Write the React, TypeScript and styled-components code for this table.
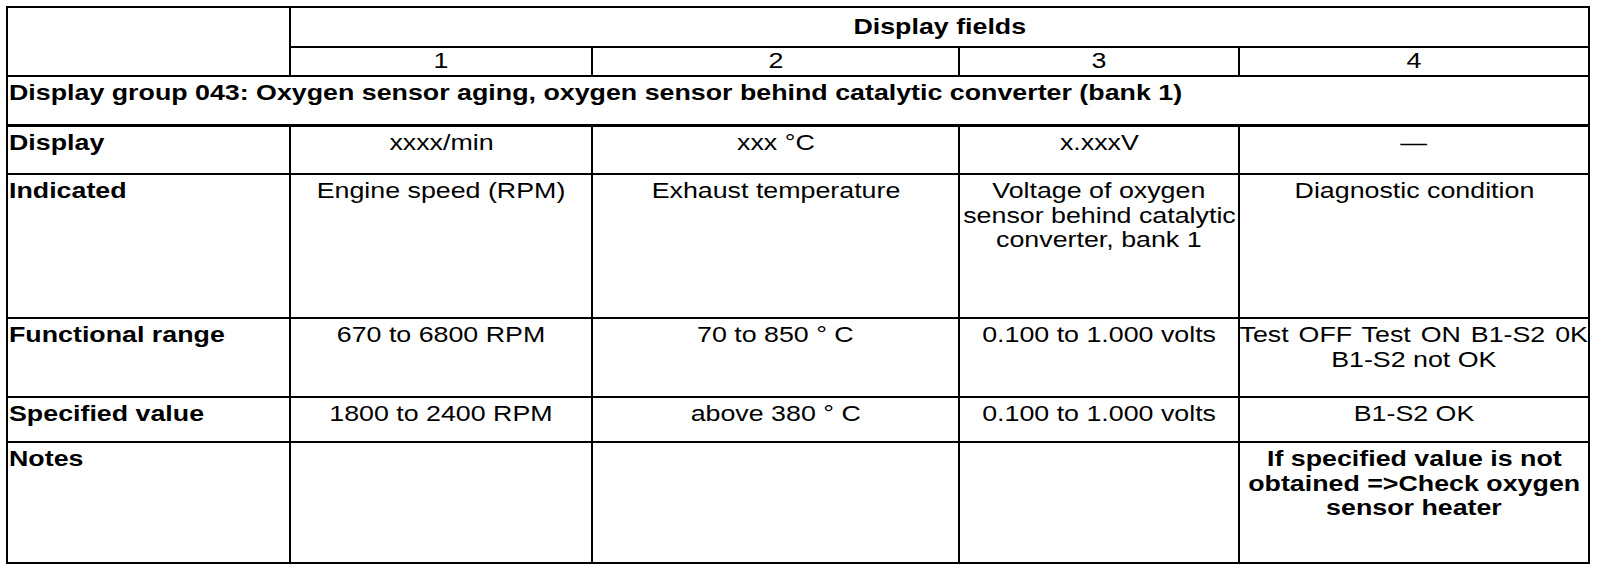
import React from "react";
import styled, { createGlobalStyle } from "styled-components";

const GlobalStyle = createGlobalStyle`
  html, body {
    margin: 0;
    padding: 0;
    background: #ffffff;
  }
  body {
    font-family: "Liberation Sans", Arial, Helvetica, sans-serif;
    font-size: 21.33px;
    line-height: 24.5px;
    color: #000000;
  }
`;

const STRETCH = 1.256;

const Sheet = styled.div`
  display: grid;
  grid-template-columns: 283px 302px 367px 280px 350px;
  grid-template-rows: 40px 29px 50px 48px 144px 79px 45px 121px;
  width: max-content;
  margin: 6px 0 0 6px;
  border-top: 2px solid #000;
  border-left: 2px solid #000;
`;

type CellProps = {
  $cols?: number;
  $rows?: number;
  $center?: boolean;
  $middle?: boolean;
  $thick?: boolean;
};

const Cell = styled.div<CellProps>`
  box-sizing: border-box;
  grid-column: span ${(p) => p.$cols ?? 1};
  grid-row: span ${(p) => p.$rows ?? 1};
  border-right: 2px solid #000;
  border-bottom: ${(p) => (p.$thick ? 3 : 2)}px solid #000;
  display: flex;
  flex-direction: column;
  align-items: ${(p) => (p.$center ? "center" : "flex-start")};
  justify-content: ${(p) => (p.$middle ? "center" : "flex-start")};
  padding: ${(p) => (p.$middle ? "0 1px" : "4px 1px 0")};
  min-width: 0;
`;

const Line = styled.span<{ $bold?: boolean; $center?: boolean; $loose?: boolean }>`
  display: block;
  white-space: pre;
  font-weight: ${(p) => (p.$bold ? 700 : 400)};
  word-spacing: ${(p) => (p.$loose ? "2px" : "0")};
  transform: scaleX(${STRETCH});
  transform-origin: ${(p) => (p.$center ? "50% 50%" : "0 50%")};
`;

type Row = {
  label: string;
  values: string[][];
  boldLast?: boolean;
};

const rows: Row[] = [
  { label: "Display", values: [["xxxx/min"], ["xxx °C"], ["x.xxxV"], ["—"]] },
  {
    label: "Indicated",
    values: [
      ["Engine speed (RPM)"],
      ["Exhaust temperature"],
      ["Voltage of oxygen", "sensor behind catalytic", "converter, bank 1"],
      ["Diagnostic condition"],
    ],
  },
  {
    label: "Functional range",
    values: [
      ["670 to 6800 RPM"],
      ["70 to 850 ° C"],
      ["0.100 to 1.000 volts"],
      ["Test OFF Test ON B1-S2 0K", "B1-S2 not OK"],
    ],
  },
  {
    label: "Specified value",
    values: [
      ["1800 to 2400 RPM"],
      ["above 380 ° C"],
      ["0.100 to 1.000 volts"],
      ["B1-S2 OK"],
    ],
  },
  {
    label: "Notes",
    values: [
      [],
      [],
      [],
      ["If specified value is not", "obtained =>Check oxygen", "sensor heater"],
    ],
    boldLast: true,
  },
];

export default function App() {
  return (
    <>
      <GlobalStyle />
      <Sheet>
        <Cell $rows={2} />
        <Cell $cols={4} $center $middle>
          <Line $bold $center>
            Display fields
          </Line>
        </Cell>
        {["1", "2", "3", "4"].map((n) => (
          <Cell key={n} $center $middle>
            <Line $center>{n}</Line>
          </Cell>
        ))}
        <Cell $cols={5} $thick>
          <Line $bold>
            Display group 043: Oxygen sensor aging, oxygen sensor behind catalytic converter (bank 1)
          </Line>
        </Cell>
        {rows.map((row) => (
          <React.Fragment key={row.label}>
            <Cell>
              <Line $bold>{row.label}</Line>
            </Cell>
            {row.values.map((lines, i) => (
              <Cell key={i} $center>
                {lines.map((t) => (
                  <Line
                    key={t}
                    $center
                    $bold={row.boldLast && i === 3}
                    $loose={t.startsWith("Test OFF")}
                  >
                    {t}
                  </Line>
                ))}
              </Cell>
            ))}
          </React.Fragment>
        ))}
      </Sheet>
    </>
  );
}
